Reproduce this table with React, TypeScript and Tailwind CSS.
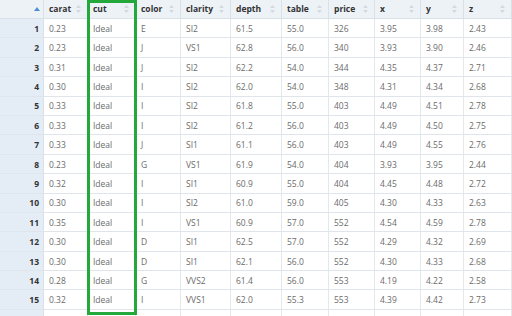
const cols = [
  { key: 'carat', w: 'w-[44px]' },
  { key: 'cut', w: 'w-[48px]' },
  { key: 'color', w: 'w-[45px]' },
  { key: 'clarity', w: 'w-[50px]' },
  { key: 'depth', w: 'w-[51px]' },
  { key: 'table', w: 'w-[47px]' },
  { key: 'price', w: 'w-[46px]' },
  { key: 'x', w: 'w-[46px]' },
  { key: 'y', w: 'w-[43px]' },
  { key: 'z', w: 'w-[48px]' },
];

const rows = [
  ['0.23', 'Ideal', 'E', 'SI2', '61.5', '55.0', '326', '3.95', '3.98', '2.43'],
  ['0.23', 'Ideal', 'J', 'VS1', '62.8', '56.0', '340', '3.93', '3.90', '2.46'],
  ['0.31', 'Ideal', 'J', 'SI2', '62.2', '54.0', '344', '4.35', '4.37', '2.71'],
  ['0.30', 'Ideal', 'I', 'SI2', '62.0', '54.0', '348', '4.31', '4.34', '2.68'],
  ['0.33', 'Ideal', 'I', 'SI2', '61.8', '55.0', '403', '4.49', '4.51', '2.78'],
  ['0.33', 'Ideal', 'I', 'SI2', '61.2', '56.0', '403', '4.49', '4.50', '2.75'],
  ['0.33', 'Ideal', 'J', 'SI1', '61.1', '56.0', '403', '4.49', '4.55', '2.76'],
  ['0.23', 'Ideal', 'G', 'VS1', '61.9', '54.0', '404', '3.93', '3.95', '2.44'],
  ['0.32', 'Ideal', 'I', 'SI1', '60.9', '55.0', '404', '4.45', '4.48', '2.72'],
  ['0.30', 'Ideal', 'I', 'SI2', '61.0', '59.0', '405', '4.30', '4.33', '2.63'],
  ['0.35', 'Ideal', 'I', 'VS1', '60.9', '57.0', '552', '4.54', '4.59', '2.78'],
  ['0.30', 'Ideal', 'D', 'SI1', '62.5', '57.0', '552', '4.29', '4.32', '2.69'],
  ['0.30', 'Ideal', 'D', 'SI1', '62.1', '56.0', '552', '4.30', '4.33', '2.68'],
  ['0.28', 'Ideal', 'G', 'VVS2', '61.4', '56.0', '553', '4.19', '4.22', '2.58'],
  ['0.32', 'Ideal', 'I', 'VVS1', '62.0', '55.3', '553', '4.39', '4.42', '2.73'],
  ['', '', '', '', '', '', '', '', '', ''],
];

const SortIcon = () => (
  <svg width="5" height="8" viewBox="0 0 5 8" className="absolute right-[6px] top-[5px]">
    <path d="M2.5 0 L5 3 L0 3 Z" fill="#d4d9de" />
    <path d="M2.5 8 L5 5 L0 5 Z" fill="#d4d9de" />
  </svg>
);

const App = () => {
  return (
    <div
      className="relative h-[316px] w-[512px] overflow-hidden bg-white text-[8.5px]"
      style={{ fontFamily: '"Open Sans", "Noto Sans", sans-serif' }}
    >
      <div className="flex h-[19px] border-b border-[#d9e1e8] bg-[#edf2f7]">
        <div className="relative w-[44px] shrink-0 border-r border-[#d9e1e8]">
          <svg width="6" height="4" viewBox="0 0 6 4" className="absolute left-[34px] top-[7px]">
            <path d="M3 0 L6 4 L0 4 Z" fill="#4a8fd6" />
          </svg>
        </div>
        {cols.map((c) => (
          <div
            key={c.key}
            className={`relative flex shrink-0 items-center border-r border-[#d9e1e8] pl-[5px] font-bold text-[#333] ${c.w}`}
          >
            {c.key}
            <SortIcon />
          </div>
        ))}
      </div>
      {rows.map((r, i) => (
        <div key={i} className="flex h-[19.4px] border-b border-[#dfe5ea]">
          <div className="flex w-[44px] shrink-0 items-center justify-end border-r border-[#d9e1e8] bg-[#e4edf6] pr-[4px] pt-[2px] font-bold text-[#333]">
            {r[0] ? i + 1 : ''}
          </div>
          {r.map((v, j) => (
            <div
              key={j}
              className={`flex shrink-0 items-center border-r border-[#e3e8ed] pl-[5px] pt-[2px] text-[#6b6b6b] ${cols[j].w}`}
            >
              {v}
            </div>
          ))}
        </div>
      ))}
      <div className="absolute left-[87px] top-0 h-[315px] w-[50px] border-[3px] border-[#22a83b]" />
    </div>
  );
};

export default App;
